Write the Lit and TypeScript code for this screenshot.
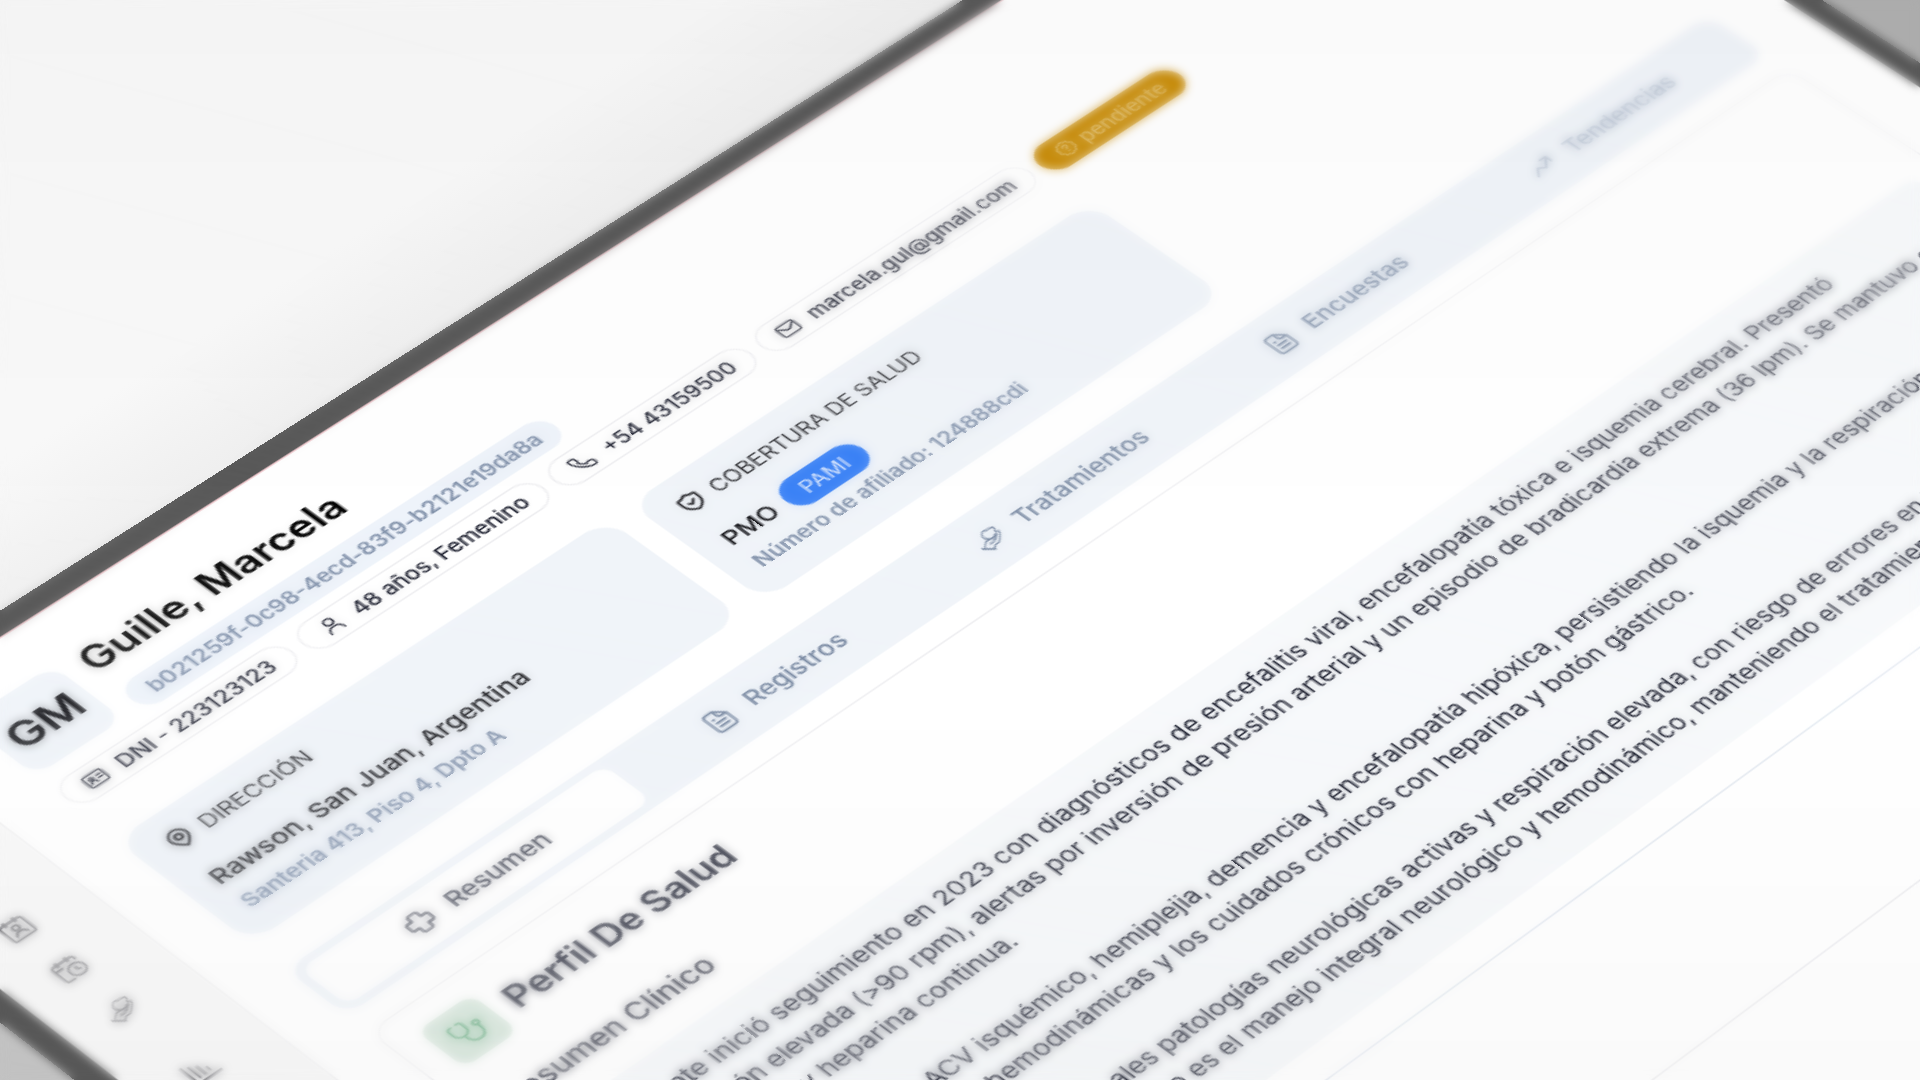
import { LitElement, html, css, svg } from "lit";
import { customElement } from "lit/decorators.js";

const icon = (body: unknown, size = "md") =>
  html`<svg class="icon ${size}" viewBox="0 0 24 24" aria-hidden="true">${body}</svg>`;

const I = {
  idCard: svg`<rect x="2" y="4" width="20" height="16" rx="3"/><circle cx="8.5" cy="10" r="2"/><path d="M5 16c.6-2 1.800-3 3.500-3s2.900 1 3.500 3M15 9h4M15 13h4"/>`,
  user: svg`<circle cx="12" cy="7" r="4.500"/><path d="M4.500 21.500c0-4.500 3-7.500 7.500-7.500s7.500 3 7.500 7.500"/>`,
  phone: svg`<path d="M22 16.920v3a2 2 0 0 1-2.180 2 19.790 19.790 0 0 1-8.630-3.070 19.500 19.500 0 0 1-6-6 19.790 19.790 0 0 1-3.070-8.670A2 2 0 0 1 4.110 2h3a2 2 0 0 1 2 1.720 12.840 12.840 0 0 0 .7 2.810 2 2 0 0 1-.45 2.110L8.090 9.910a16 16 0 0 0 6 6l1.270-1.270a2 2 0 0 1 2.110-.45 12.840 12.840 0 0 0 2.810.7A2 2 0 0 1 22 16.920z"/>`,
  mail: svg`<rect x="2" y="4" width="20" height="16" rx="3"/><path d="M3 6.500l6.500 5.500c1.500 1.200 3.500 1.200 5 0L21 6.500"/>`,
  question: svg`<path d="M12 2l2.600 1.900 3.200.1 1 3 2.500 2-.9 3 .9 3-2.500 2-1 3-3.200.1L12 22l-2.600-1.900-3.200-.1-1-3-2.500-2 .9-3-.9-3 2.500-2 1-3 3.200-.1z"/><path d="M9.800 9.500a2.300 2.300 0 1 1 3.200 2.100c-.7.4-1 .8-1 1.400M12 16v.2"/>`,
  pin: svg`<path d="M12 22c4-3.500 8-7.500 8-12a8 8 0 1 0-16 0c0 4.500 4 8.500 8 12z"/><circle cx="12" cy="10" r="3"/>`,
  shield: svg`<path d="M12 2c2.500 2 5 2.800 8.500 3v6.500c0 5-3.500 8-8.500 10.500-5-2.500-8.500-5.500-8.500-10.500V5C7 4.800 9.500 4 12 2z"/><path d="M8.800 12l2.400 2.300 4-4.300"/>`,
  cross: svg`<path d="M9.500 2.500h5a1.500 1.500 0 0 1 1.500 1.500v4h4a1.500 1.500 0 0 1 1.500 1.500v5a1.500 1.500 0 0 1-1.500 1.500h-4v4a1.500 1.500 0 0 1-1.500 1.500h-5A1.500 1.500 0 0 1 8 20v-4H4a1.500 1.500 0 0 1-1.500-1.500v-5A1.500 1.500 0 0 1 4 8h4V4a1.500 1.500 0 0 1 1.500-1.500z"/>`,
  file: svg`<path d="M13 2H7a3 3 0 0 0-3 3v14a3 3 0 0 0 3 3h10a3 3 0 0 0 3-3V9zM13 2v4a3 3 0 0 0 3 3h4M8 17h8M8 13h8M8 9h1"/>`,
  care: svg`<g transform="translate(12 12) rotate(45) scale(.56 .96) translate(-12 -13)"><path d="M10.500 2.500c2-1.500 5.500-1.500 6.500 1 .5 1 .3 1.800.3 1.800s2.200.7 2.200 3c0 2.500-2.500 3.700-5 4.700-2.500.9-6 1.500-9 .5C2.500 12.500.500 10.500 1 8c.5-2.200 3-3.300 5.500-3C7.300 4 9 3 10.500 2.500z"/><path d="M21 5c2 .5 3 2 3 4v5.500c0 2-1.500 3.500-3.500 4.500-2 1-2.500 2-2.500 3.500v2M6 24v-4c0-2.500 1-4 3-5 2-.8 4.500-1 6-2 1.500-1 2-2.500 2-4M19.500 9c.3 4-1.500 7-4.500 8.500L12 19M1.500 24.500h18"/></g>`,
  trend: svg`<path d="M2 18l6-7 5 4 8-9M15 6h6v6"/>`,
  chart: svg`<path d="M3 2v19h19M7.500 5v12M12 8v9M16.500 13v3"/>`,
  calUser: svg`<path d="M16 2v4M8 2v4"/><rect x="3" y="4" width="18" height="18" rx="2.500"/><circle cx="12" cy="11" r="2.500"/><path d="M7.500 18.500c.8-2.300 2.300-3.500 4.500-3.500s3.700 1.200 4.500 3.500"/>`,
  calClock: svg`<path d="M16 2v4M8 2v4M3 9h6M21 7.500V6a2 2 0 0 0-2-2H5a2 2 0 0 0-2 2v14a2 2 0 0 0 2 2h4"/><circle cx="16" cy="16" r="6"/><path d="M16 13.500V16l1.800 1"/>`,
  steth: svg`<path d="M6 3H5a2 2 0 0 0-2 2v4a5 5 0 0 0 10 0V5a2 2 0 0 0-2-2h-1M8 14v2a6 6 0 0 0 12 0v-4"/><circle cx="20" cy="10" r="2"/>`,
};

@customElement("app-root")
export class AppRoot extends LitElement {
  static styles = css`
    :host {
      display: block;
      position: relative;
      height: 100vh;
      overflow: hidden;
      font-family: Inter, "Liberation Sans", sans-serif;
      color: #0f1222;
      background:
        linear-gradient(to top right, #c6c6c6 0 6%, transparent 20%),
        linear-gradient(to bottom left, #b0b0b0 0 6%, transparent 20%),
        linear-gradient(147deg, #f9f9f9 20%, #e2e2e2 36%);
    }
    * { box-sizing: border-box; margin: 0; }
    .icon { fill: none; stroke: currentColor; stroke-width: 1.8; stroke-linecap: round; stroke-linejoin: round; flex: none; }
    .xs { width: 14px; height: 14px; }
    .sm { width: 16px; height: 16px; stroke-width: 2.2; }
    .md { width: 18px; height: 18px; }
    .lg { width: 20px; height: 20px; }

    .tablet {
      position: absolute;
      left: 0;
      top: 0;
      width: 1210px;
      padding: 15px;
      background: #5a5a5a;
      transform-origin: 15px 15px;
      transform: translate(-15px, -15px) matrix3d(1.535, -0.912, 0, 0.000101, 1.286, 0.916, 0, -0.000077, 0, 0, 1, 0, -250, 796, 0, 1);
    }
    .screen {
      display: flex;
      overflow: hidden;
      background: #fff;
      border-top: 1px solid #f0c8cd;
    }
    nav {
      flex: none;
      width: 76px;
      padding: 157px 10px 0 0;
      background: #f8f8f8;
      border-right: 1px solid #efeff0;
      display: flex;
      flex-direction: column;
      align-items: center;
      gap: 20px;
      color: #6b6b70;
    }
    nav a { display: flex; padding: 1px; color: inherit; }
    nav a.apart { margin-top: 20px; }
    main {
      flex: 1;
      min-width: 0;
      padding: 30px 40px 120px 32px;
      display: flex;
      flex-direction: column;
    }
    header { display: flex; gap: 12px; align-items: center; padding-left: 2px; }
    .avatar {
      width: 58px; height: 56px; border-radius: 12px; background: #f0f4f9;
      display: grid; place-items: center;
      font-size: 26px; font-weight: 600; color: #0b0b0f;
    }
    .who { display: flex; flex-direction: column; gap: 8px; align-items: flex-start; }
    h1 { font-size: 24px; line-height: 32px; font-weight: 600; color: #000; }
    .uid { height: 24px; padding: 0 12px; border-radius: 12px; background: #eef3fa; color: #8090a9; font-size: 13px; line-height: 24px; font-weight: 600; }
    .pills { display: flex; gap: 7px; margin-top: 7px; padding-left: 2px; }
    .pill {
      display: flex; align-items: center; gap: 8px; height: 24px; padding: 0 12px;
      border: 1px solid #ececef; border-radius: 12px;
      font-size: 13px; font-weight: 500; color: inherit; text-decoration: none; white-space: nowrap;
    }
    .pill.pending { gap: 4px; border-color: #ca8f0e; background: #ca8f0e; color: #eed9a6; }
    .cards { display: grid; grid-template-columns: repeat(3, 1fr); gap: 16px; margin-top: 29px; }
    .card { height: 104px; padding: 12px 16px; border-radius: 16px; background: #f0f4f9; color: #1c1c20; }
    h2 { display: flex; align-items: center; gap: 6px; font-size: 13px; line-height: 20px; font-weight: 400; }
    .strong { display: flex; align-items: center; gap: 8px; height: 24px; margin-top: 12px; font-size: 15px; font-weight: 500; color: #0b0b0f; }
    .badge { height: 24px; padding: 0 12px; border-radius: 12px; background: #3b82f6; color: #e5eefe; font-size: 13px; line-height: 24px; font-weight: 400; }
    .sub { margin-top: 2px; font-size: 13px; line-height: 20px; font-weight: 600; color: #8090a9; }
    .tabs { display: grid; grid-template-columns: repeat(5, 1fr); margin-top: 26px; padding: 5px; border-radius: 12px; background: #f0f4f9; }
    .tabs button {
      display: flex; align-items: center; justify-content: center; gap: 10px; height: 36px; padding: 0;
      border: 0; border-radius: 8px; background: none; font: 500 15px/24px Inter, "Liberation Sans", sans-serif; color: #71829c;
    }
    .tabs button.on { background: #fff; color: #3b3f4e; }
    .tabs button.idle { color: #9ba8bc; }
    .profile { margin-top: 16px; padding: 16px 16px 116px; border: 1px solid #ededf0; border-radius: 12px; }
    .title { display: flex; align-items: center; gap: 10px; }
    .mark { display: grid; place-items: center; width: 36px; height: 36px; border-radius: 8px; background: #dce9e0; color: #5fa97b; }
    .title h2 { font-size: 21px; line-height: 28px; font-weight: 600; color: #2a2d3c; }
    h3 { margin-top: 20px; font-size: 17px; line-height: 24px; font-weight: 500; color: #2a2d3c; }
    .summary { margin-top: 14px; padding: 13px 16px 19px 24px; border-radius: 8px; background: #f7f9fb; display: flex; flex-direction: column; gap: 20px; }
    .summary p { font-size: 15px; line-height: 23px; white-space: nowrap; }
    .rule { height: 1px; margin-top: 21px; background: #e2e8f0; border: 0; }

    .haze { position: absolute; inset: 0; pointer-events: none; }
    .far { backdrop-filter: blur(5px); mask-image: linear-gradient(195deg, rgb(0 0 0 / 0.88) 12%, transparent 58%); }
    .near { backdrop-filter: blur(5px); mask-image: linear-gradient(10deg, rgb(0 0 0 / 0.85), rgb(0 0 0 / 0.5) 20%, transparent 46%); }
    .tone { background: linear-gradient(to bottom, rgb(0 0 0 / 0.02), transparent 50%, transparent 64%, rgb(0 0 0 / 0.02)); }
  `;

  render() {
    return html`
      <div class="tablet">
        <div class="screen">
          <nav aria-label="Principal">
            <a href="#pacientes" aria-label="Pacientes">${icon(I.calUser)}</a>
            <a href="#turnos" aria-label="Turnos">${icon(I.calClock)}</a>
            <a href="#tratamientos" aria-label="Tratamientos">${icon(I.care)}</a>
            <a href="#reportes" class="apart" aria-label="Reportes">${icon(I.chart)}</a>
          </nav>
          <main>
            <header>
              <div class="avatar">GM</div>
              <div class="who">
                <h1>Guille, Marcela</h1>
                <span class="uid">b021259f-0c98-4ecd-83f9-b2121e19da8a</span>
              </div>
            </header>
            <div class="pills">
              <span class="pill">${icon(I.idCard, "xs")}DNI - 223123123</span>
              <span class="pill">${icon(I.user, "xs")}48 años, Femenino</span>
              <a class="pill" href="tel:+5443159500">${icon(I.phone, "xs")}+54 43159500</a>
              <a class="pill" href="mailto:marcela.gul@gmail.com">${icon(I.mail, "xs")}marcela.gul@gmail.com</a>
              <span class="pill pending">${icon(I.question, "xs")}pendiente</span>
            </div>
            <div class="cards">
              <section class="card">
                <h2>${icon(I.pin, "sm")}DIRECCIÓN</h2>
                <p class="strong">Rawson, San Juan, Argentina</p>
                <p class="sub">Santeria 413, Piso 4, Dpto A</p>
              </section>
              <section class="card">
                <h2>${icon(I.shield, "sm")}COBERTURA DE SALUD</h2>
                <p class="strong">PMO <span class="badge">PAMI</span></p>
                <p class="sub">Número de afiliado: 124888cdi</p>
              </section>
            </div>
            <div class="tabs" role="tablist">
              <button role="tab" class="on" aria-selected="true">${icon(I.cross)}Resumen</button>
              <button role="tab">${icon(I.file)}Registros</button>
              <button role="tab">${icon(I.care)}Tratamientos</button>
              <button role="tab">${icon(I.file)}Encuestas</button>
              <button role="tab" class="idle">${icon(I.trend)}Tendencias</button>
            </div>
            <section class="profile">
              <div class="title">
                <span class="mark">${icon(I.steth, "lg")}</span>
                <h2>Perfil De Salud</h2>
              </div>
              <h3>Resumen Clínico</h3>
              <div class="summary">
                <p>Paciente inició seguimiento en 2023 con diagnósticos de encefalitis viral, encefalopatía tóxica e isquemia cerebral. Presentó<br />respiración elevada (&gt;90 rpm), alertas por inversión de presión arterial y un episodio de bradicardia extrema (36 lpm). Se mantuvo con<br />tratamiento y heparina continua.</p>
                <p>Además sufrió un ACV isquémico, hemiplejia, demencia y encefalopatía hipóxica, persistiendo la isquemia y la respiración<br />algunas alteraciones hemodinámicas y los cuidados crónicos con heparina y botón gástrico.</p>
                <p>Se identifican como principales patologías neurológicas activas y respiración elevada, con riesgo de errores en la<br />medicación y el objetivo clínico es el manejo integral neurológico y hemodinámico, manteniendo el tratamiento</p>
              </div>
              <hr class="rule" />
            </section>
          </main>
        </div>
      </div>
      <div class="haze far"></div>
      <div class="haze near"></div>
      <div class="haze tone"></div>
    `;
  }
}
